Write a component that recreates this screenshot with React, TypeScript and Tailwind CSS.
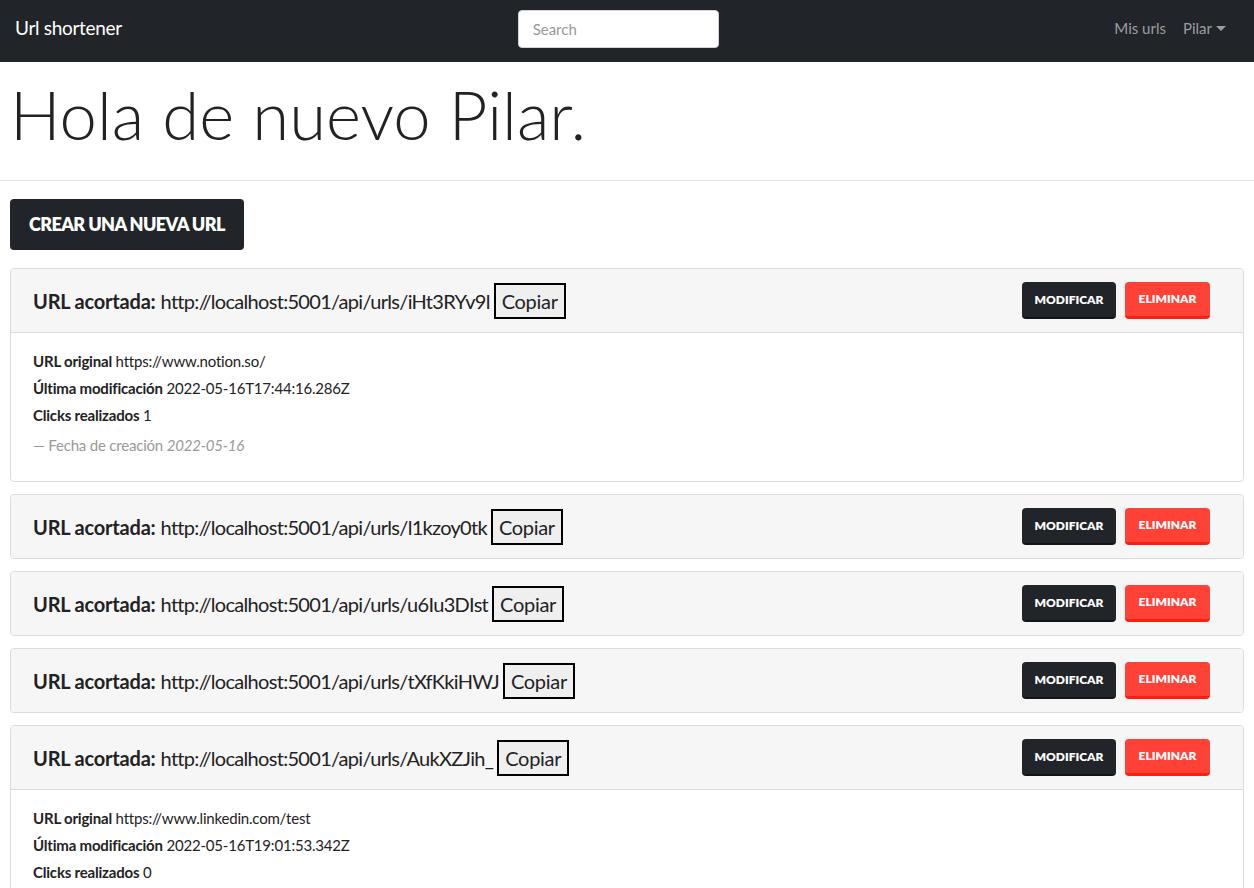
import React from "react";

type UrlItem = {
  code: string;
  open?: boolean;
  original?: string;
  modified?: string;
  clicks?: number;
  created?: string;
};

const urls: UrlItem[] = [
  { code: "iHt3RYv9l", open: true, original: "https://www.notion.so/", modified: "2022-05-16T17:44:16.286Z", clicks: 1, created: "2022-05-16" },
  { code: "l1kzoy0tk" },
  { code: "u6Iu3DIst" },
  { code: "tXfKkiHWJ" },
  { code: "AukXZJih_", open: true, original: "https://www.linkedin.com/test", modified: "2022-05-16T19:01:53.342Z", clicks: 0, created: "2022-05-16" },
];

const font = { fontFamily: "Lato, 'Noto Sans', sans-serif" };

function UrlCard({ item }: { item: UrlItem }) {
  return (
    <div className="mb-3 overflow-hidden rounded border border-[#dcdcdc] bg-white">
      <div className={`flex items-center justify-between bg-[#f6f6f6] py-[13px] pl-[22px] pr-[33px] ${item.open ? "border-b border-[#dcdcdc]" : ""}`}>
        <div className="flex items-center text-[20px] text-[#222]">
          <span className="font-bold tracking-[-0.2px]">URL acortada:</span>
          <span className="ml-[5px] tracking-[-0.7px]">http://localhost:5001/api/urls/{item.code}</span>
          <button className="ml-[4px] h-[36px] border-2 border-black bg-[#efefef] px-[6px] text-[20px] leading-none tracking-[-0.3px] text-[#222]">Copiar</button>
        </div>
        <div className="flex items-center gap-[9px]">
          <button className="h-[37px] w-[94px] rounded-[4px] border-b-2 border-[#111418] bg-[#212529] text-[12px] font-extrabold uppercase text-white">Modificar</button>
          <button className="h-[37px] w-[85px] rounded-[4px] border-b-[3px] border-[#ff1d0d] bg-[#ff4136] text-[12px] font-extrabold uppercase text-white">Eliminar</button>
        </div>
      </div>
      {item.open && (
        <div className="px-[22px] pb-[25px] pt-[17px] text-[15px] leading-[22px] tracking-[-0.2px] text-[#222]">
          <p className="mb-[5px]"><span className="font-bold">URL original</span> {item.original}</p>
          <p className="mb-[5px]"><span className="font-bold">Última modificación</span> {item.modified}</p>
          <p className="mb-[8px]"><span className="font-bold">Clicks realizados</span> {item.clicks}</p>
          <p className="text-[#999]">— Fecha de creación <em>{item.created}</em></p>
        </div>
      )}
    </div>
  );
}

export default function App() {
  return (
    <div className="min-h-screen bg-white" style={font}>
      <nav className="flex h-[62px] items-center justify-between bg-[#212529] pb-[5px] pl-[15px] pr-[28px]">
        <span className="text-[19px] tracking-[-0.3px] text-white">Url shortener</span>
        <input
          placeholder="Search"
          className="h-[38px] w-[201px] rounded-[4px] border border-[#ced4da] bg-white px-[14px] text-[15px] text-[#222] placeholder:text-[#999] outline-none"
        />
        <div className="flex items-center gap-[17px] text-[15px] text-[#9a9da1]">
          <span>Mis urls</span>
          <span className="flex items-center">
            Pilar
            <span className="ml-[4px] inline-block h-0 w-0 border-x-[5px] border-t-[5px] border-x-transparent border-t-[#9a9da1]" />
          </span>
        </div>
      </nav>

      <div className="pb-[26px] pl-[10px] pt-[12px]">
        <h1 className="text-[67px] font-light leading-[80px] text-[#222]">Hola de nuevo Pilar.</h1>
      </div>
      <hr className="border-[#e5e5e5]" />

      <div className="px-[10px] pt-[18px]">
        <button className="mb-[18px] h-[51px] rounded-[4px] bg-[#212529] px-[19px] text-[18px] font-extrabold uppercase tracking-[-0.6px] text-white">Crear una nueva URL</button>
        {urls.map((u) => (
          <UrlCard key={u.code} item={u} />
        ))}
      </div>
    </div>
  );
}
